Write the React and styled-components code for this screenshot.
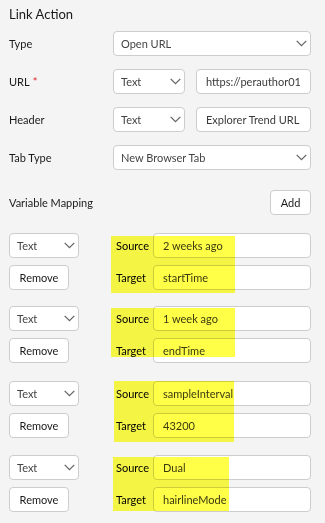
import React from 'react';
import styled, { createGlobalStyle } from 'styled-components';

const GlobalStyle = createGlobalStyle`
  html, body {
    margin: 0;
    padding: 0;
    background: #f4f4f4;
    font-family: Lato, "Noto Sans", sans-serif;
  }
`;

const Page = styled.div`
  width: 325px;
  box-sizing: border-box;
  padding: 3px 14px 0 9px;
  color: #1a1a1a;
  font-size: 11px;
`;

const Title = styled.h2`
  margin: 0 0 6px;
  font-size: 13px;
  font-weight: 400;
  line-height: 22px;
  color: #1a1a1a;
`;

const FormRow = styled.div`
  display: flex;
  align-items: center;
  height: 25px;
  margin-bottom: ${(p) => p.gap ?? 13}px;
`;

const Label = styled.div`
  width: 104px;
  flex-shrink: 0;
`;

const Required = styled.span`
  color: #d9262c;
  margin-left: 3px;
`;

const Controls = styled.div`
  flex: 1;
  min-width: 0;
  display: flex;
  gap: 11px;
  height: 100%;
`;

const SelectWrap = styled.div`
  position: relative;
  width: ${(p) => (p.width ? `${p.width}px` : 'auto')};
  flex: ${(p) => (p.width ? 'none' : '1')};
  height: 25px;
`;

const NativeSelect = styled.select`
  appearance: none;
  width: 100%;
  height: 100%;
  box-sizing: border-box;
  border: 1px solid #cdcdcd;
  border-radius: 4px;
  background: #fff;
  padding: 0 20px 0 7px;
  font: inherit;
  color: #444;
  outline: none;
`;

const Chevron = styled.svg`
  position: absolute;
  right: 4px;
  top: 9px;
  width: 11px;
  height: 7px;
  pointer-events: none;
`;

const TextInput = styled.input`
  flex: 1;
  min-width: 0;
  width: 0;
  height: 25px;
  box-sizing: border-box;
  border: 1px solid #cdcdcd;
  border-radius: 4px;
  background: #fff;
  padding: 0 9px;
  font: inherit;
  color: #3a3a3a;
  outline: none;
`;

const Button = styled.button`
  height: 25px;
  box-sizing: border-box;
  border: 1px solid #cdcdcd;
  border-radius: 4px;
  background: #fff;
  padding: 0;
  width: ${(p) => p.width}px;
  font: inherit;
  color: #1a1a1a;
`;

const MappingHeader = styled.div`
  display: flex;
  justify-content: space-between;
  align-items: center;
  height: 24px;
  margin: 20px 0 19px;
`;

const Group = styled.div`
  position: relative;
  display: flex;
  margin-bottom: ${(p) => p.gap}px;
`;

const LeftCol = styled.div`
  width: 104px;
  flex-shrink: 0;
  display: flex;
  flex-direction: column;
  gap: 7px;
  align-items: flex-start;
`;

const RightCol = styled.div`
  flex: 1;
  min-width: 0;
  display: flex;
  flex-direction: column;
  gap: 7px;
`;

const Pair = styled.div`
  display: flex;
  align-items: center;
  height: 25px;
`;

const PairLabel = styled.div`
  width: 37px;
  flex-shrink: 0;
  padding-left: 3px;
  color: #000;
`;

const Highlight = styled.div`
  position: absolute;
  background: rgb(255, 255, 72);
  mix-blend-mode: multiply;
  pointer-events: none;
`;

const ChevronIcon = () => (
  <Chevron viewBox="0 0 11 7">
    <path d="M0.7 0.9 L5.5 5.7 L10.3 0.9" fill="none" stroke="#666" strokeWidth="1.3" />
  </Chevron>
);

const Select = ({ value, width }) => (
  <SelectWrap width={width}>
    <NativeSelect value={value} onChange={() => {}}>
      <option>{value}</option>
    </NativeSelect>
    <ChevronIcon />
  </SelectWrap>
);

const mappings = [
  { source: '2 weeks ago', target: 'startTime', hl: { left: 102, top: 3, width: 124, height: 57 }, gap: 16 },
  { source: '1 week ago', target: 'endTime', hl: { left: 102, top: 2, width: 124, height: 49 }, gap: 18 },
  { source: 'sampleInterval', target: '43200', hl: { left: 105, top: 0, width: 120, height: 61 }, gap: 17 },
  { source: 'Dual', target: 'hairlineMode', hl: { left: 104, top: 2, width: 116, height: 54 }, gap: 0 },
];

export default function App() {
  return (
    <>
      <GlobalStyle />
      <Page>
        <Title>Link Action</Title>
        <FormRow>
          <Label>Type</Label>
          <Controls>
            <Select value="Open URL" />
          </Controls>
        </FormRow>
        <FormRow>
          <Label>
            URL<Required>*</Required>
          </Label>
          <Controls>
            <Select value="Text" width={72} />
            <TextInput readOnly value="https://perauthor01.example.com/explorer" />
          </Controls>
        </FormRow>
        <FormRow>
          <Label>Header</Label>
          <Controls>
            <Select value="Text" width={72} />
            <TextInput readOnly value="Explorer Trend URL" />
          </Controls>
        </FormRow>
        <FormRow gap={0}>
          <Label>Tab Type</Label>
          <Controls>
            <Select value="New Browser Tab" />
          </Controls>
        </FormRow>
        <MappingHeader>
          <span>Variable Mapping</span>
          <Button width={41}>Add</Button>
        </MappingHeader>
        {mappings.map((m, i) => (
          <Group key={i} gap={m.gap}>
            <LeftCol>
              <Select value="Text" width={70} />
              <Button width={60}>Remove</Button>
            </LeftCol>
            <RightCol>
              <Pair>
                <PairLabel>Source</PairLabel>
                <TextInput readOnly value={m.source} />
              </Pair>
              <Pair>
                <PairLabel>Target</PairLabel>
                <TextInput readOnly value={m.target} />
              </Pair>
            </RightCol>
            <Highlight style={m.hl} />
          </Group>
        ))}
      </Page>
    </>
  );
}
